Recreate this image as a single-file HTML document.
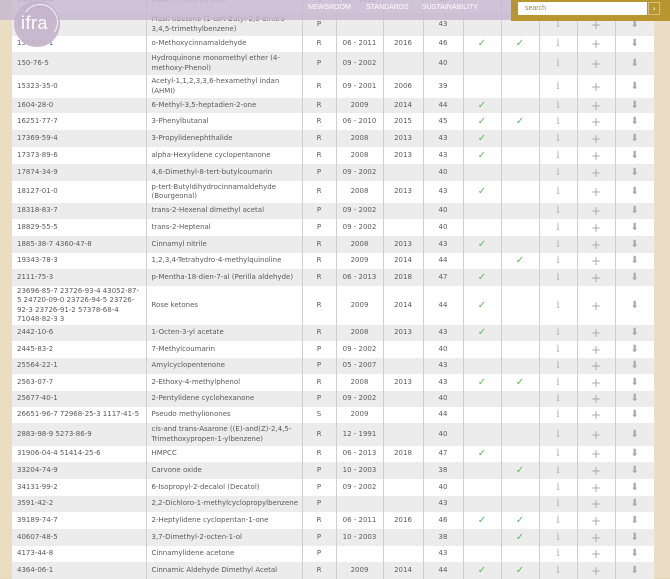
<!DOCTYPE html>
<html><head><meta charset="utf-8">
<style>
html,body{margin:0;padding:0}
body{width:670px;height:577px;overflow:hidden;position:relative;background:#e6d9bd;font-family:"DejaVu Sans","Liberation Sans",sans-serif;}
.paper{position:absolute;inset:0;background:linear-gradient(90deg,#e9ddc2,#e2d4b6 50%,#eadfc6)}
table{position:absolute;left:12px;top:-11px;width:642px;border-collapse:collapse;table-layout:fixed;font-size:7px;color:#5a5a5a;background:#fff}
td{padding:0 0 0 5px;border-left:1px solid #cfcfcf;vertical-align:middle;line-height:9.5px;overflow:hidden;white-space:normal}
td:first-child{border-left:none;padding-left:5px;padding-right:2px}
tr.g td{background:#ececec}
tr:nth-child(n) td:nth-child(n+3){text-align:center;padding:0}
.c{color:#5cb85c;font-size:10px}
.i{font-family:"DejaVu Serif",serif;color:#aaa;font-size:10px}
.p{color:#aaa;font-size:12px;line-height:8px}
.d{color:#aaa;font-size:10px}
.hdr{position:absolute;left:0;top:0;width:670px;height:20px;background:rgba(200,184,208,0.85)}
.logo{position:absolute;left:14px;top:1px;width:46px;height:46px;border-radius:50%;background:rgba(196,180,204,0.92)}
.logo span{position:absolute;left:7px;top:12px;color:#fff;font-family:"Liberation Sans",sans-serif;font-size:18px;letter-spacing:0.5px}
.arc{position:absolute;left:8px;top:3px;width:34px;height:34px;border-radius:50%;border:1px solid rgba(255,255,255,0.85);border-bottom-color:transparent;border-left-color:transparent;transform:rotate(-10deg)}
.nav{position:absolute;top:4px;color:#fff;font-family:"Liberation Sans",sans-serif;font-size:7px}
.sb{position:absolute;left:511px;top:0;width:159px;height:21px;background:#b8962f}
.si{position:absolute;left:518px;top:2px;width:129px;height:13px;background:#fff;font-family:"Liberation Sans",sans-serif;font-size:7px;color:#a08a50;line-height:13px;padding-left:7px;box-sizing:border-box}
.sbt{position:absolute;left:648px;top:2px;width:12px;height:13px;border:1px solid #d8c07a;box-sizing:border-box;color:#fff;font-size:8px;line-height:11px;text-align:center}
</style></head><body>
<div class="paper"></div>
<table>
<colgroup><col style="width:134px"><col style="width:156px"><col style="width:34px"><col style="width:47px"><col style="width:40px"><col style="width:40px"><col style="width:38px"><col style="width:38px"><col style="width:38px"><col style="width:38px"><col style="width:39px"></colgroup>
<tr style="height:24px"><td>1490-04-6</td><td>Musk ... trien-10-one)</td><td>S</td><td>09 - 2002</td><td></td><td>40</td><td></td><td></td><td class="i">i</td><td class="p">+</td><td class="d">&#11015;</td></tr>
<tr class="g" style="height:23px"><td>145-39-1</td><td>Musk tibetene (1-tert-Butyl-2,6-dinitro-3,4,5-trimethylbenzene)</td><td>P</td><td></td><td></td><td>43</td><td></td><td></td><td class="i">i</td><td class="p">+</td><td class="d">&#11015;</td></tr>
<tr style="height:16px"><td>1504-74-1</td><td>o-Methoxycinnamaldehyde</td><td>R</td><td>06 - 2011</td><td>2016</td><td>46</td><td class="c">✓</td><td class="c">✓</td><td class="i">i</td><td class="p">+</td><td class="d">&#11015;</td></tr>
<tr class="g" style="height:23px"><td>150-76-5</td><td>Hydroquinone monomethyl ether (4-methoxy-Phenol)</td><td>P</td><td>09 - 2002</td><td></td><td>40</td><td></td><td></td><td class="i">i</td><td class="p">+</td><td class="d">&#11015;</td></tr>
<tr style="height:23px"><td>15323-35-0</td><td>Acetyl-1,1,2,3,3,6-hexamethyl indan (AHMI)</td><td>R</td><td>09 - 2001</td><td>2006</td><td>39</td><td></td><td></td><td class="i">i</td><td class="p">+</td><td class="d">&#11015;</td></tr>
<tr class="g" style="height:15px"><td>1604-28-0</td><td>6-Methyl-3,5-heptadien-2-one</td><td>R</td><td>2009</td><td>2014</td><td>44</td><td class="c">✓</td><td></td><td class="i">i</td><td class="p">+</td><td class="d">&#11015;</td></tr>
<tr style="height:17px"><td>16251-77-7</td><td>3-Phenylbutanal</td><td>R</td><td>06 - 2010</td><td>2015</td><td>45</td><td class="c">✓</td><td class="c">✓</td><td class="i">i</td><td class="p">+</td><td class="d">&#11015;</td></tr>
<tr class="g" style="height:17px"><td>17369-59-4</td><td>3-Propylidenephthalide</td><td>R</td><td>2008</td><td>2013</td><td>43</td><td class="c">✓</td><td></td><td class="i">i</td><td class="p">+</td><td class="d">&#11015;</td></tr>
<tr style="height:17px"><td>17373-89-6</td><td>alpha-Hexylidene cyclopentanone</td><td>R</td><td>2008</td><td>2013</td><td>43</td><td class="c">✓</td><td></td><td class="i">i</td><td class="p">+</td><td class="d">&#11015;</td></tr>
<tr class="g" style="height:17px"><td>17874-34-9</td><td>4,6-Dimethyl-8-tert-butylcoumarin</td><td>P</td><td>09 - 2002</td><td></td><td>40</td><td></td><td></td><td class="i">i</td><td class="p">+</td><td class="d">&#11015;</td></tr>
<tr style="height:22px"><td>18127-01-0</td><td>p-tert-Butyldihydrocinnamaldehyde (Bourgeonal)</td><td>R</td><td>2008</td><td>2013</td><td>43</td><td class="c">✓</td><td></td><td class="i">i</td><td class="p">+</td><td class="d">&#11015;</td></tr>
<tr class="g" style="height:16px"><td>18318-83-7</td><td>trans-2-Hexenal dimethyl acetal</td><td>P</td><td>09 - 2002</td><td></td><td>40</td><td></td><td></td><td class="i">i</td><td class="p">+</td><td class="d">&#11015;</td></tr>
<tr style="height:17px"><td>18829-55-5</td><td>trans-2-Heptenal</td><td>P</td><td>09 - 2002</td><td></td><td>40</td><td></td><td></td><td class="i">i</td><td class="p">+</td><td class="d">&#11015;</td></tr>
<tr class="g" style="height:17px"><td>1885-38-7 4360-47-8</td><td>Cinnamyl nitrile</td><td>R</td><td>2008</td><td>2013</td><td>43</td><td class="c">✓</td><td></td><td class="i">i</td><td class="p">+</td><td class="d">&#11015;</td></tr>
<tr style="height:16px"><td>19343-78-3</td><td>1,2,3,4-Tetrahydro-4-methylquinoline</td><td>R</td><td>2009</td><td>2014</td><td>44</td><td></td><td class="c">✓</td><td class="i">i</td><td class="p">+</td><td class="d">&#11015;</td></tr>
<tr class="g" style="height:17px"><td>2111-75-3</td><td style="white-space:nowrap">p-Mentha-18-dien-7-al (Perilla aldehyde)</td><td>R</td><td>06 - 2013</td><td>2018</td><td>47</td><td class="c">✓</td><td></td><td class="i">i</td><td class="p">+</td><td class="d">&#11015;</td></tr>
<tr style="height:39px"><td>23696-85-7 23726-93-4 43052-87-<br>5 24720-09-0 23726-94-5 23726-<br>92-3 23726-91-2 57378-68-4<br>71048-82-3 3</td><td>Rose ketones</td><td>R</td><td>2009</td><td>2014</td><td>44</td><td class="c">✓</td><td></td><td class="i">i</td><td class="p">+</td><td class="d">&#11015;</td></tr>
<tr class="g" style="height:16px"><td>2442-10-6</td><td>1-Octen-3-yl acetate</td><td>R</td><td>2008</td><td>2013</td><td>43</td><td class="c">✓</td><td></td><td class="i">i</td><td class="p">+</td><td class="d">&#11015;</td></tr>
<tr style="height:17px"><td>2445-83-2</td><td>7-Methylcoumarin</td><td>P</td><td>09 - 2002</td><td></td><td>40</td><td></td><td></td><td class="i">i</td><td class="p">+</td><td class="d">&#11015;</td></tr>
<tr class="g" style="height:16px"><td>25564-22-1</td><td>Amylcyclopentenone</td><td>P</td><td>05 - 2007</td><td></td><td>43</td><td></td><td></td><td class="i">i</td><td class="p">+</td><td class="d">&#11015;</td></tr>
<tr style="height:17px"><td>2563-07-7</td><td>2-Ethoxy-4-methylphenol</td><td>R</td><td>2008</td><td>2013</td><td>43</td><td class="c">✓</td><td class="c">✓</td><td class="i">i</td><td class="p">+</td><td class="d">&#11015;</td></tr>
<tr class="g" style="height:16px"><td>25677-40-1</td><td>2-Pentylidene cyclohexanone</td><td>P</td><td>09 - 2002</td><td></td><td>40</td><td></td><td></td><td class="i">i</td><td class="p">+</td><td class="d">&#11015;</td></tr>
<tr style="height:16px"><td style="white-space:nowrap">26651-96-7 72968-25-3 1117-41-5</td><td>Pseudo methylionones</td><td>S</td><td>2009</td><td></td><td>44</td><td></td><td></td><td class="i">i</td><td class="p">+</td><td class="d">&#11015;</td></tr>
<tr class="g" style="height:23px"><td>2883-98-9 5273-86-9</td><td>cis-and trans-Asarone ((E)-and(Z)-2,4,5-Trimethoxypropen-1-ylbenzene)</td><td>R</td><td>12 - 1991</td><td></td><td>40</td><td></td><td></td><td class="i">i</td><td class="p">+</td><td class="d">&#11015;</td></tr>
<tr style="height:16px"><td>31906-04-4 51414-25-6</td><td>HMPCC</td><td>R</td><td>06 - 2013</td><td>2018</td><td>47</td><td class="c">✓</td><td></td><td class="i">i</td><td class="p">+</td><td class="d">&#11015;</td></tr>
<tr class="g" style="height:17px"><td>33204-74-9</td><td>Carvone oxide</td><td>P</td><td>10 - 2003</td><td></td><td>38</td><td></td><td class="c">✓</td><td class="i">i</td><td class="p">+</td><td class="d">&#11015;</td></tr>
<tr style="height:17px"><td>34131-99-2</td><td>6-Isopropyl-2-decalol (Decatol)</td><td>P</td><td>09 - 2002</td><td></td><td>40</td><td></td><td></td><td class="i">i</td><td class="p">+</td><td class="d">&#11015;</td></tr>
<tr class="g" style="height:16px"><td>3591-42-2</td><td style="white-space:nowrap">2,2-Dichloro-1-methylcyclopropylbenzene</td><td>P</td><td></td><td></td><td>43</td><td></td><td></td><td class="i">i</td><td class="p">+</td><td class="d">&#11015;</td></tr>
<tr style="height:17px"><td>39189-74-7</td><td>2-Heptylidene cyclopentan-1-one</td><td>R</td><td>06 - 2011</td><td>2016</td><td>46</td><td class="c">✓</td><td class="c">✓</td><td class="i">i</td><td class="p">+</td><td class="d">&#11015;</td></tr>
<tr class="g" style="height:17px"><td>40607-48-5</td><td>3,7-Dimethyl-2-octen-1-ol</td><td>P</td><td>10 - 2003</td><td></td><td>38</td><td></td><td class="c">✓</td><td class="i">i</td><td class="p">+</td><td class="d">&#11015;</td></tr>
<tr style="height:16px"><td>4173-44-8</td><td>Cinnamylidene acetone</td><td>P</td><td></td><td></td><td>43</td><td></td><td></td><td class="i">i</td><td class="p">+</td><td class="d">&#11015;</td></tr>
<tr class="g" style="height:17px"><td>4364-06-1</td><td>Cinnamic Aldehyde Dimethyl Acetal</td><td>R</td><td>2009</td><td>2014</td><td>44</td><td class="c">✓</td><td class="c">✓</td><td class="i">i</td><td class="p">+</td><td class="d">&#11015;</td></tr>
</table>
<div class="hdr"></div>
<div class="logo"><div class="arc"></div><span>ifra</span></div>
<div class="nav" style="left:308px">NEWSROOM</div>
<div class="nav" style="left:366px">STANDARDS</div>
<div class="nav" style="left:422px">SUSTAINABILITY</div>
<div class="sb"></div>
<div class="si">search</div>
<div class="sbt">›</div>
</body></html>
